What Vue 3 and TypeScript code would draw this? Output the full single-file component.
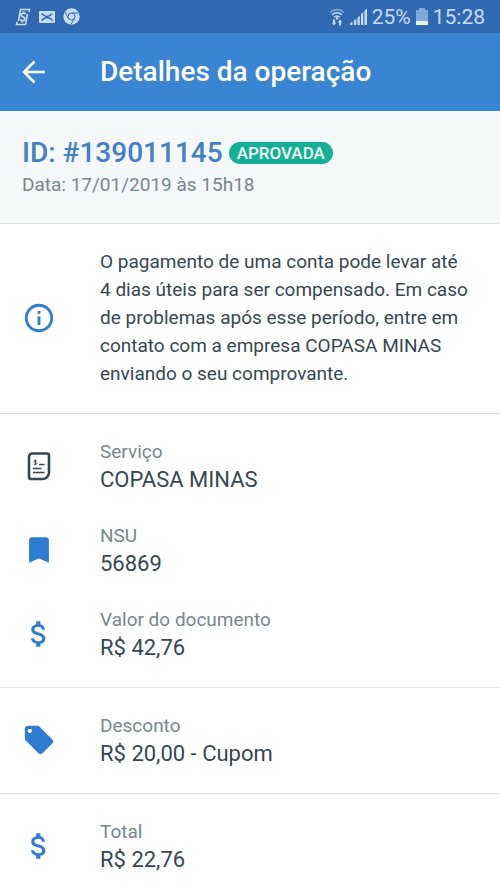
<script setup lang="ts">
type IconName = 'receipt' | 'bookmark' | 'dollar' | 'tag'

interface DetailItem {
  icon: IconName
  label: string
  value: string
}

const sections: DetailItem[][] = [
  [
    { icon: 'receipt', label: 'Serviço', value: 'COPASA MINAS' },
    { icon: 'bookmark', label: 'NSU', value: '56869' },
    { icon: 'dollar', label: 'Valor do documento', value: 'R$ 42,76' },
  ],
  [{ icon: 'tag', label: 'Desconto', value: 'R$ 20,00 - Cupom' }],
  [{ icon: 'dollar', label: 'Total', value: 'R$ 22,76' }],
]
</script>

<template>
  <div class="screen">
    <div class="status-bar">
      <div class="status-group notifications">
        <svg width="16" height="18" viewBox="0 0 16 18" aria-hidden="true">
          <path d="M3.500 13L5.500 1.500H14.500L14 4M12.500 6L10.500 16.500H1.500L2 14" fill="none" stroke="currentColor" stroke-width="1.600" />
          <path d="M10.800 6.200C10.500 4.900 6.300 4.600 6 7c-.2 2.200 4.200 1.500 4 4-.2 2.300-4.400 2.200-4.800.4M8.800 3.400v1.800M7.400 12.500v2" fill="none" stroke="currentColor" stroke-width="1.800" />
        </svg>
        <svg width="16" height="14" viewBox="0 0 16 14" aria-hidden="true">
          <rect y="1" width="16" height="12" rx="1" fill="currentColor" />
          <path d="M2.500 3.500c2 2 3.500 3 5.500 3s3.500-1 5.500-3M2.500 10.500c2-2 3.500-3 5.500-3s3.500 1 5.500 3" fill="none" stroke="#3068b1" stroke-width="1.400" />
        </svg>
        <svg width="17" height="17" viewBox="0 0 17 17" aria-hidden="true">
          <circle cx="8.500" cy="8.500" r="8.200" fill="currentColor" />
          <circle cx="8.500" cy="8.500" r="3.500" fill="none" stroke="#3068b1" stroke-width="1" />
          <path d="M8.500 5H15.500M5.500 10.300L2 4.200M11.500 10.300L8 16.500" fill="none" stroke="#3068b1" stroke-width="1" />
        </svg>
      </div>
      <div class="status-group">
        <svg width="16" height="18" viewBox="0 0 16 18" aria-hidden="true">
          <g fill="none" stroke="currentColor" stroke-width="1.300">
            <path d="M1 4.500c4-4 10-4 14 0" opacity=".6" />
            <path d="M3 7c3-3 7-3 10 0" />
            <path d="M5 9.300c2-1.800 4-1.800 6 0" />
          </g>
          <path d="M8 8.800l1.500 1.400L8 12l-1.500-1.800zM4 11.500h2v3h1.200L5 17.500 2.800 14.500H4zM10 17.500v-3H8.800l2.200-3 2.200 3H12v3z" fill="currentColor" />
        </svg>
        <svg width="17" height="17" viewBox="0 0 17 17" fill="currentColor" aria-hidden="true">
          <path d="M0 17v-1.500l2.500-2V17zM4 12.500l2.300-1.500v6H4zM7.500 9.500l2.300-1.500v9H7.500zM11 6l2.300-2v13H11zM14.500 2.500L17 .5V17h-2.500z" />
        </svg>
        <span>25%</span>
        <svg width="12" height="18" viewBox="0 0 12 18" fill="currentColor" aria-hidden="true">
          <path d="M3 0h6v2h3v11H0V2h3z" opacity=".55" />
          <path d="M0 13h12v4H0z" fill="#eaf4ff" />
        </svg>
        <span>15:28</span>
      </div>
    </div>

    <header class="app-bar">
      <button class="back" type="button" aria-label="Voltar">
        <svg width="24" height="24" viewBox="0 0 24 24" fill="none" stroke="currentColor" stroke-width="2.600" aria-hidden="true">
          <path d="M23 12H3M12.500 1.500L2 12l10.500 10.500" />
        </svg>
      </button>
      <h1>Detalhes da operação</h1>
    </header>

    <main>
      <section class="summary">
        <div class="operation">
          <h2>ID: #139011145</h2>
          <span class="badge">APROVADA</span>
        </div>
        <p class="date">Data: 17/01/2019 às 15h18</p>
      </section>

      <section class="group">
        <div class="row">
          <svg class="icon" viewBox="0 0 24 24" fill="currentColor" aria-hidden="true">
            <path d="M11 17h2v-6h-2v6zm1-15C6.480 2 2 6.480 2 12s4.480 10 10 10 10-4.480 10-10S17.520 2 12 2zm0 18c-4.410 0-8-3.590-8-8s3.590-8 8-8 8 3.590 8 8-3.590 8-8 8zM11 9h2V7h-2v2z" />
          </svg>
          <p class="notice">
            O pagamento de uma conta pode levar até 4&nbsp;dias úteis para ser compensado. Em caso de problemas após esse
            período, entre em contato com a empresa COPASA MINAS enviando o seu comprovante.
          </p>
        </div>
      </section>

      <section v-for="(items, index) in sections" :key="index" class="group">
        <dl v-for="item in items" :key="item.label" class="row">
          <svg v-if="item.icon === 'receipt'" class="icon dark" viewBox="0 0 34 34" fill="none" stroke="currentColor" aria-hidden="true">
            <path d="M10.500 4.500H25a2 2 0 0 1 2 2V23.500a6.500 6.500 0 0 1-6.500 6.500H9a2 2 0 0 1-2-2V8a3.500 3.500 0 0 1 3.500-3.500z" stroke-width="2.600" />
            <path d="M17 15.500h5.500M11 19.500h8.500M11 23.500h11.500" stroke-width="1.700" />
            <path d="M14.800 12.200c-.5-1-2.800-.9-2.700.3.100 1.200 2.700.7 2.700 2 0 1.300-2.400 1.300-2.900.2M13.400 10.600v5.600" stroke-width="1" />
          </svg>
          <svg v-else-if="item.icon === 'bookmark'" class="icon" viewBox="0 0 24 24" fill="currentColor" aria-hidden="true">
            <path d="M17 3H7c-1.100 0-1.990.9-1.990 2L5 21l7-3 7 3V5c0-1.100-.9-2-2-2z" />
          </svg>
          <svg v-else-if="item.icon === 'dollar'" class="icon" viewBox="0 0 24 24" fill="currentColor" aria-hidden="true">
            <path d="M11.800 10.900c-2.270-.59-3-1.200-3-2.150 0-1.090 1.010-1.850 2.700-1.850 1.780 0 2.440.85 2.500 2.100h2.210c-.07-1.720-1.120-3.300-3.210-3.810V3h-3v2.160c-1.940.42-3.500 1.680-3.500 3.610 0 2.310 1.910 3.460 4.700 4.130 2.500.6 3 1.480 3 2.410 0 .69-.49 1.790-2.700 1.790-2.060 0-2.870-.92-2.980-2.100h-2.200c.12 2.190 1.760 3.420 3.680 3.830V21h3v-2.150c1.950-.37 3.500-1.500 3.500-3.550 0-2.840-2.430-3.810-4.700-4.400z" />
          </svg>
          <svg v-else class="icon" viewBox="0 0 24 24" fill="currentColor" aria-hidden="true">
            <path d="M21.410 11.580l-9-9C12.050 2.220 11.550 2 11 2H4c-1.100 0-2 .9-2 2v7c0 .55.220 1.050.590 1.420l9 9c.360.360.860.580 1.410.580.550 0 1.050-.220 1.410-.590l7-7c.370-.360.590-.860.590-1.410 0-.550-.230-1.060-.590-1.420zM5.500 7C4.670 7 4 6.330 4 5.500S4.670 4 5.500 4 7 4.670 7 5.500 6.330 7 5.500 7z" />
          </svg>
          <div>
            <dt>{{ item.label }}</dt>
            <dd>{{ item.value }}</dd>
          </div>
        </dl>
      </section>
    </main>
  </div>
</template>

<style>
body {
  margin: 0;
  background: #fff;
}
</style>

<style scoped>
.screen {
  font-family: Roboto, "Liberation Sans", sans-serif;
  color: #37474f;
}

h1,
h2,
p,
dl,
dd {
  margin: 0;
}

svg {
  display: block;
  flex-shrink: 0;
}

.status-bar {
  display: flex;
  align-items: center;
  justify-content: space-between;
  height: 33px;
  padding: 0 15px;
  background: #3068b1;
  color: #c5ddf8;
  font-size: 21px;
  line-height: 24px;
}

.status-group {
  display: flex;
  align-items: center;
  gap: 5px;
}

.notifications {
  gap: 8px;
}

.app-bar {
  display: flex;
  align-items: center;
  height: 78px;
  padding: 0 22px;
  background: #3985d3;
  color: #fff;
}

.back {
  width: 78px;
  padding: 0;
  border: 0;
  background: none;
  color: inherit;
  cursor: pointer;
}

h1 {
  font-size: 28px;
  font-weight: 500;
  line-height: 36px;
}

.summary {
  padding: 24px 22px;
  border-bottom: 1px solid #d9dddd;
  background: #f5f8f8;
}

.operation {
  display: flex;
  align-items: center;
  gap: 6px;
}

h2 {
  color: #417fca;
  font-size: 28px;
  font-weight: 500;
  line-height: 36px;
}

.badge {
  padding: 0 8px;
  border-radius: 11px;
  background: #14b094;
  color: #f2fffb;
  font-size: 17px;
  font-weight: 500;
  line-height: 22px;
}

.date {
  color: #78878d;
  font-size: 19px;
  line-height: 28px;
}

.group {
  display: grid;
  gap: 28px;
  padding: 24px 22px 25px;
  border-bottom: 1px solid #dfe2e2;
}

.group:last-child {
  border-bottom: 0;
}

.row {
  display: flex;
  align-items: center;
  gap: 44px;
}

.icon {
  width: 34px;
  height: 34px;
  color: #2f7dd3;
}

.dark {
  color: #37474f;
}

.notice {
  font-size: 19px;
  line-height: 28px;
}

dt {
  color: #78878d;
  font-size: 19px;
  line-height: 28px;
}

dd {
  font-size: 22px;
  line-height: 28px;
}
</style>
